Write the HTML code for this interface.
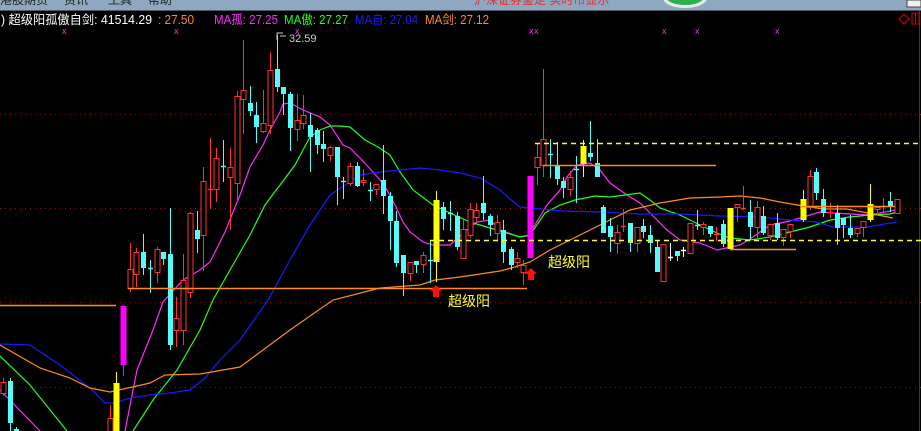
<!DOCTYPE html>
<html><head><meta charset="utf-8"><style>
html,body{margin:0;padding:0;background:#000;width:921px;height:431px;overflow:hidden}
svg{display:block}
text{font-family:"Liberation Sans","Noto Sans CJK SC",sans-serif}
</style></head><body>
<svg id="s" width="921" height="431" xmlns="http://www.w3.org/2000/svg">
<rect x="0" y="0" width="921" height="431" fill="#000"/>
<rect x="0" y="0" width="921" height="10" fill="#8fa8c2"/>
<line x1="0" y1="10.5" x2="921" y2="10.5" stroke="#505a66"/>
<text x="0" y="4" font-size="12" fill="#222">港股期货</text>
<text x="64" y="4" font-size="12" fill="#222">资讯</text>
<text x="108" y="4" font-size="12" fill="#222">工具</text>
<text x="148" y="4" font-size="12" fill="#222">帮助</text>
<text x="474" y="4" font-size="12" fill="#e03030">沪深证券鉴定   实时市显示</text>
<ellipse cx="685" cy="-2" rx="22" ry="10" fill="#e8e8e8"/>
<ellipse cx="685" cy="-3" rx="19" ry="8" fill="#2cb04c"/>
<rect x="907" y="0" width="14" height="7" fill="#f0f0f0" stroke="#444"/>
<g font-size="12.5">
<text x="1" y="24" fill="#fff" textLength="151" lengthAdjust="spacingAndGlyphs">) 超级阳孤傲自剑: 41514.29</text>
<text x="158" y="24" fill="#ff8c1a" textLength="36" lengthAdjust="spacingAndGlyphs">: 27.50</text>
<text x="214" y="24" fill="#ff2cff" textLength="64" lengthAdjust="spacingAndGlyphs">MA孤: 27.25</text>
<text x="284" y="24" fill="#20ff20" textLength="64" lengthAdjust="spacingAndGlyphs">MA傲: 27.27</text>
<text x="355" y="24" fill="#1a1aff" textLength="63" lengthAdjust="spacingAndGlyphs">MA自: 27.04</text>
<text x="425" y="24" fill="#ff8c1a" textLength="64" lengthAdjust="spacingAndGlyphs">MA剑: 27.12</text>
</g>
<path d="M899 19 L904 14 L909 19 L904 24 Z" fill="none" stroke="#d00" stroke-width="1"/>
<rect x="912" y="13" width="7" height="11" fill="none" stroke="#d00"/>
<line x1="915.5" y1="13" x2="915.5" y2="24" stroke="#d00"/>
<line x1="919.5" y1="11" x2="919.5" y2="431" stroke="#c00000" stroke-width="1"/>
<g fill="#ff2cff" font-size="9">
<text x="62" y="34">x</text><text x="174" y="34">x</text><text x="295" y="34">x</text>
<text x="529" y="34">x</text><text x="534" y="34">x</text><text x="662" y="34">x</text>
<text x="695" y="34">x</text><text x="775" y="34">x</text>
</g>
<g stroke="#a01010" stroke-dasharray="1,4" stroke-width="1">
<line x1="0" y1="114.5" x2="921" y2="114.5"/>
<line x1="0" y1="208.5" x2="921" y2="208.5"/>
<line x1="0" y1="302.5" x2="921" y2="302.5"/>
<line x1="15" y1="387.5" x2="921" y2="387.5"/>
</g>
<path d="M277 40 L277 33 L283 33 M280 36 L286 36" stroke="#ccc" fill="none"/>
<text x="289" y="42" font-size="11" fill="#ccc">32.59</text>
<g id="lines" fill="none" stroke-width="1.2"></g>
<g id="c"></g>
<g stroke-width="1.5" fill="none">
<line x1="128" y1="288.5" x2="527" y2="288.5" stroke="#ff8c1a"/>
<line x1="0" y1="305.5" x2="116" y2="305.5" stroke="#ff8c1a"/>
<line x1="543" y1="165.5" x2="716" y2="165.5" stroke="#ff8c1a"/>
<line x1="730" y1="249.5" x2="796" y2="249.5" stroke="#ff8c1a"/>
<line x1="800" y1="206.5" x2="895" y2="206.5" stroke="#ff8c1a"/>
<line x1="430" y1="240.5" x2="921" y2="240.5" stroke="#ffff20" stroke-dasharray="5,4"/>
<line x1="535" y1="143.5" x2="921" y2="143.5" stroke="#ffff20" stroke-dasharray="5,4"/>
</g>
<path d="M436 285 L442 291 L439 291 L439 297 L433 297 L433 291 L430 291 Z" fill="#ff1010"/>
<path d="M531 268 L537 274 L534 274 L534 280 L528 280 L528 274 L525 274 Z" fill="#ff1010"/>
<text x="448" y="306" font-size="14" fill="#ffff30">超级阳</text>
<text x="548" y="267" font-size="14" fill="#ffff30">超级阳</text>
</svg>
<script>
var NS="http://www.w3.org/2000/svg";
function el(p,t,a){var e=document.createElementNS(NS,t);for(var k in a)e.setAttribute(k,a[k]);p.appendChild(e);return e;}
var L=document.getElementById("lines");
var lines={
"#ff2cff":"0,390 40,431 M125,431 137,370 153,330 163,302 183,280 200,270 210,262 225,232 233,212 240,195 250,167 263,145 270,130 280,112 283,104 290,103 303,110 320,117 330,125 343,145 350,148 360,158 373,172 380,180 387,190 395,205 403,222 410,232 423,242 433,245 450,245 463,233 477,222 490,220 500,230 520,237 527,236 533,228 547,205 560,190 567,177 577,165 590,163 600,170 610,183 627,195 640,203 657,220 667,230 680,240 700,243 717,250 740,245 750,239 770,225 790,221 820,212 850,214 870,215 880,213 895,210",
"#20ff20":"0,356 30,385 67,431 M133,431 153,400 177,370 200,330 213,300 230,270 250,235 265,205 280,185 295,165 310,137 320,130 330,126 340,126 350,127 365,140 378,147 390,155 400,172 413,190 433,205 450,213 470,222 490,228 520,237 530,235 545,213 560,205 575,200 595,196 610,197 625,195 640,193 650,200 660,208 680,215 700,225 717,233 730,238 750,240 770,237 790,232 810,227 830,220 850,217 870,215 890,214 897,212",
"#1a1aff":"0,344 30,345 60,365 90,388 105,403 115,403 130,398 150,395 170,393 190,390 205,378 220,360 240,340 268,300 290,260 310,225 330,195 345,185 360,175 380,172 400,170 420,168 440,170 460,173 480,178 500,190 510,199 520,207 530,208 560,211 600,212 640,214 680,214 720,216 760,217 790,220 816,222 833,227 867,227 897,222",
"#ff8c1a":"0,345 40,368 70,378 90,388 110,392 128,388 150,383 165,375 200,374 240,367 290,330 333,300 380,288 420,285 435,280 460,277 480,274 500,271 515,267 530,262 550,250 570,240 600,225 630,210 660,203 690,198 720,197 740,196 760,198 780,202 797,205 810,207 823,209 847,209 893,218"
};
for(var c in lines){var pts=lines[c].split(" ");var d="";pts.forEach(function(p){if(p[0]=="M"){d+=" M"+p.slice(1);}else{d+=(d===""?"M":" L")+p;}});el(L,"path",{d:d,stroke:c});}
var C=document.getElementById("c");
var col={r:"#ff3232",c:"#54fcfc",y:"#ffff00",m:"#ff00ff",w:"#ffffff"};
var data=[
[3,382,393,378,396,"r"],[10,381,423,378,431,"c"],[16,429,431,427,431,"c"],[110,418,431,405,431,"r"],
[116,383,431,372,431,"y"],[123,306,365,306,376,"m"],
[130,269,288,243,292,"r"],[136,252,274,248,287,"r"],[143,252,268,234,275,"c"],[150,268,268,260,293,"c"],
[157,249,272,247,283,"r"],[163,252,259,252,265,"c"],[170,254,345,208,350,"c"],[176,318,330,297,347,"r"],
[183,280,330,254,345,"r"],[190,213,292,212,298,"r"],[197,230,239,211,253,"c"],[203,181,235,167,271,"r"],
[210,189,189,138,209,"r"],[216,158,189,148,202,"r"],[223,166,166,140,182,"c"],[230,167,177,148,230,"r"],
[237,96,183,91,201,"r"],[243,90,99,40,134,"r"],[250,103,111,86,116,"c"],[256,115,127,102,143,"c"],
[263,123,131,90,133,"r"],[270,70,125,52,134,"r"],[277,69,87,35,92,"c"],[283,87,94,87,115,"c"],
[290,94,128,92,151,"c"],[297,120,129,94,141,"r"],[303,115,123,95,129,"r"],[310,125,137,113,172,"c"],
[317,130,145,128,154,"c"],[323,144,149,131,162,"c"],[330,147,155,146,161,"r"],[337,147,177,147,205,"c"],
[343,181,181,177,199,"c"],[350,166,183,163,186,"r"],[357,166,186,162,187,"c"],[363,180,182,169,186,"r"],
[370,190,190,182,201,"c"],[376,184,189,184,195,"r"],[383,180,196,145,214,"c"],[390,196,221,192,250,"c"],
[396,221,263,211,267,"c"],[403,255,273,255,296,"c"],[410,262,273,262,281,"r"],[416,261,265,261,273,"c"],
[423,255,264,252,273,"r"],[430,260,260,241,283,"c"],[436,200,262,191,282,"y"],[443,207,219,202,230,"c"],
[450,213,213,201,231,"c"],[457,216,247,212,250,"c"],[463,229,258,220,259,"r"],[470,209,235,203,238,"r"],
[476,210,217,203,221,"r"],[483,203,213,176,220,"c"],[490,216,225,214,236,"c"],[497,222,233,215,241,"r"],
[503,230,252,220,263,"c"],[511,249,265,247,270,"c"],[517,258,262,252,268,"r"],[523,265,272,260,285,"r"],
[530,176,258,176,258,"m"],[537,157,167,143,185,"r"],[543,139,165,69,177,"r"],[550,154,154,139,178,"c"],
[557,165,179,142,185,"c"],[563,181,188,177,198,"c"],[570,177,189,171,196,"r"],[576,169,169,156,203,"c"],
[583,146,164,140,177,"y"],[590,153,157,121,161,"c"],[597,163,177,139,177,"c"],[603,207,233,205,233,"c"],
[610,226,237,218,252,"c"],[617,232,243,225,254,"r"],[623,226,226,209,232,"r"],[630,223,243,223,252,"c"],
[637,227,243,227,252,"r"],[643,226,232,219,238,"c"],[650,235,243,225,253,"c"],[657,247,272,240,272,"c"],
[663,244,281,244,281,"r"],[670,257,257,243,261,"w"],[677,251,256,251,261,"c"],[683,250,250,247,257,"w"],
[690,223,253,223,253,"r"],[697,225,225,210,230,"c"],[703,224,227,222,235,"r"],[710,226,234,226,237,"c"],
[716,234,234,227,241,"r"],[723,224,244,220,247,"c"],[730,208,249,208,249,"y"],[737,204,207,204,222,"r"],
[743,208,208,186,210,"r"],[750,212,227,200,240,"c"],[757,207,227,201,238,"r"],[763,216,233,206,235,"c"],
[770,224,235,224,240,"r"],[777,223,238,213,240,"c"],[783,229,237,229,246,"r"],[790,224,231,224,238,"r"],
[803,199,220,190,222,"y"],[810,176,207,170,210,"r"],[816,172,193,168,200,"c"],[823,199,213,189,217,"c"],
[830,212,212,203,218,"r"],[837,213,228,205,245,"c"],[843,218,225,218,238,"c"],[850,228,235,215,238,"c"],
[857,228,233,228,237,"r"],[863,221,227,221,237,"r"],[870,204,220,184,222,"y"],[877,207,209,207,216,"r"],
[883,206,206,198,217,"r"],[890,201,207,192,212,"c"],[897,199,213,199,213,"r"]
];
data.forEach(function(d){var x=d[0],t=d[1],b=d[2],h=d[3],l=d[4],k=d[5],c=col[k];
el(C,"line",{x1:x+0.5,y1:h,x2:x+0.5,y2:l,stroke:c,"stroke-width":1});
if(b-t<1){el(C,"line",{x1:x-2,y1:t+0.5,x2:x+3,y2:t+0.5,stroke:c,"stroke-width":1.5});return;}
if(k=="r"){el(C,"rect",{x:x-2,y:t+0.5,width:5,height:b-t,fill:"#000",stroke:c,"stroke-width":1});}
else{var w=(k=="y"||k=="m")?6:5;el(C,"rect",{x:x-(w==6?2.5:2),y:t,width:w,height:b-t,fill:c});}
});
</script>
</body></html>
